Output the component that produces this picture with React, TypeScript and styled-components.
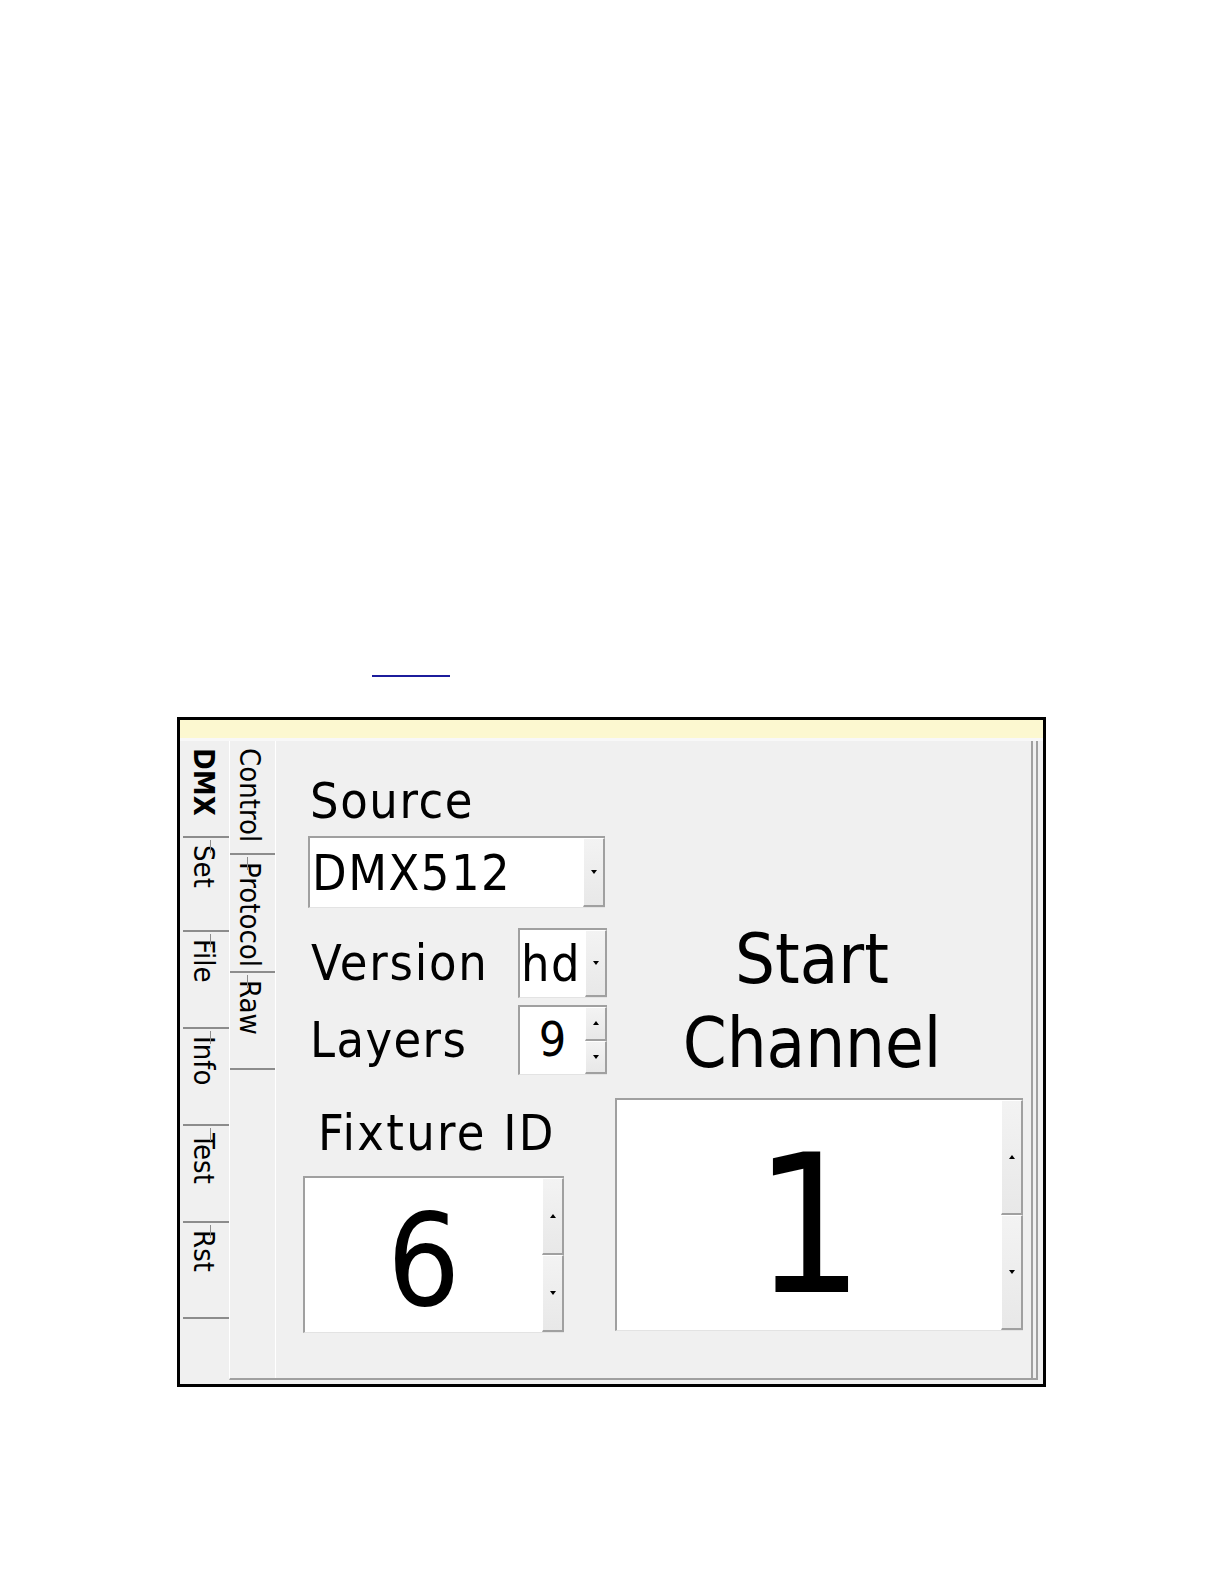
import React from "react";
import styled, { createGlobalStyle, css } from "styled-components";

const FONT = `"DejaVu Sans Condensed", "DejaVu Sans", "Liberation Sans", sans-serif`;

const GlobalStyle = createGlobalStyle`
  html, body { margin: 0; padding: 0; background: #ffffff; }
  #root { width: 1224px; min-height: 1584px; }
`;

const Page = styled.div`
  width: 1224px;
  min-height: 1584px;
  box-sizing: border-box;
  padding-top: 675px;
  font-family: ${FONT};
  font-stretch: condensed;
  color: #000;
`;

const BlankLink = styled.a`
  display: block;
  margin-left: 372px;
  width: 78px;
  height: 0;
  border-bottom: 2px solid #1c1c9c;
`;

const Frame = styled.div`
  margin: 40px 0 0 177px;
  width: 869px;
  height: 670px;
  box-sizing: border-box;
  border: 3px solid #000;
  background: #f0f0f0;
  display: flex;
  flex-direction: column;
`;

const InfoBar = styled.div`
  flex: none;
  height: 18px;
  background: #fcf8d0;
`;

const TabArea = styled.div`
  flex: 1;
  min-height: 0;
  display: flex;
  border-top: 3px solid #f8f8f8;
`;

const TabStrip = styled.div<{ $w: number; $pl: number }>`
  flex: none;
  width: ${(p) => p.$w}px;
  box-sizing: border-box;
  padding-left: ${(p) => p.$pl}px;
  display: flex;
  flex-direction: column;
`;

const Tab = styled.div<{ $h: number; $active?: boolean; $tickX?: number; $pr: number; $lh: number }>`
  position: relative;
  flex: none;
  height: ${(p) => p.$h}px;
  box-sizing: border-box;
  border-bottom: 2px solid #8c8c8c;
  writing-mode: vertical-rl;
  white-space: nowrap;
  font-size: 29px;
  line-height: ${(p) => p.$lh}px;
  font-weight: ${(p) => (p.$active ? 700 : 400)};
  padding-top: 7px;
  padding-right: ${(p) => p.$pr}px;
  ${(p) =>
    p.$tickX !== undefined &&
    css`
      &::before {
        content: "";
        position: absolute;
        top: 2px;
        left: ${p.$tickX}px;
        width: 1px;
        height: 13px;
        background: #8c8c8c;
      }
    `}
`;

const OuterPage = styled.div`
  flex: 1;
  min-width: 0;
  display: flex;
  margin: 0 5px 4px 0;
  border-left: 1px solid #ffffff;
  border-right: 2px solid #a0a0a0;
  border-bottom: 2px solid #a0a0a0;
`;

const InnerPage = styled.div`
  flex: 1;
  min-width: 0;
  margin-right: 3px;
  border-left: 1px solid #ffffff;
  border-right: 2px solid #a0a0a0;
`;

const Content = styled.div`
  display: grid;
  grid-template-columns: 304px 408px;
  column-gap: 8px;
  padding-left: 27px;
`;

const Column = styled.div<{ $pt: number }>`
  display: flex;
  flex-direction: column;
  padding-top: ${(p) => p.$pt}px;
`;

const Label = styled.div<{
  $size: number;
  $lh: number;
  $pl?: number;
  $pr?: number;
  $mt?: number;
  $ls?: number;
  $center?: boolean;
}>`
  font-size: ${(p) => p.$size}px;
  line-height: ${(p) => p.$lh}px;
  letter-spacing: ${(p) => p.$ls ?? 0}px;
  padding-left: ${(p) => p.$pl ?? 0}px;
  padding-right: ${(p) => p.$pr ?? 0}px;
  margin-top: ${(p) => p.$mt ?? 0}px;
  text-align: ${(p) => (p.$center ? "center" : "left")};
  white-space: nowrap;
`;

const Row = styled.div<{ $mt: number }>`
  display: grid;
  grid-template-columns: 215px 89px;
  align-items: center;
  margin-top: ${(p) => p.$mt}px;
`;

const Field = styled.div<{ $w: number; $h: number; $ml?: number; $mt?: number }>`
  display: flex;
  width: ${(p) => p.$w}px;
  height: ${(p) => p.$h}px;
  margin-left: ${(p) => p.$ml ?? 0}px;
  margin-top: ${(p) => p.$mt ?? 0}px;
  box-sizing: border-box;
  background: #ffffff;
  border-top: 2px solid #a0a0a0;
  border-left: 2px solid #a0a0a0;
  border-bottom: 1px solid #e3e3e3;
`;

const Value = styled.div<{
  $size: number;
  $center?: boolean;
  $pt?: number;
  $pb?: number;
  $pl?: number;
  $ls?: number;
}>`
  flex: 1;
  min-width: 0;
  display: flex;
  align-items: center;
  justify-content: ${(p) => (p.$center ? "center" : "flex-start")};
  font-size: ${(p) => p.$size}px;
  line-height: 1;
  letter-spacing: ${(p) => p.$ls ?? 0}px;
  padding-top: ${(p) => p.$pt ?? 0}px;
  padding-bottom: ${(p) => p.$pb ?? 0}px;
  padding-left: ${(p) => p.$pl ?? 0}px;
  white-space: nowrap;
`;

const Buttons = styled.div`
  flex: none;
  width: 22px;
  display: flex;
  flex-direction: column;
`;

const Btn = styled.div`
  flex: 1;
  display: flex;
  align-items: center;
  justify-content: center;
  box-sizing: border-box;
  background: linear-gradient(#f3f3f3, #e8e8e8);
  border-top: 1px solid #ffffff;
  border-left: 1px solid #ffffff;
  border-right: 2px solid #a0a0a0;
  border-bottom: 2px solid #a0a0a0;
`;

const Arrow = styled.span<{ $dir: "up" | "down" }>`
  width: 0;
  height: 0;
  border-left: 3px solid transparent;
  border-right: 3px solid transparent;
  ${(p) => (p.$dir === "up" ? "border-bottom: 4px solid #000;" : "border-top: 4px solid #000;")}
`;

const outerTabs = [
  { label: "DMX", h: 97, active: true },
  { label: "Set", h: 94 },
  { label: "File", h: 97 },
  { label: "Info", h: 97 },
  { label: "Test", h: 97 },
  { label: "Rst", h: 96 },
];

const innerTabs = [
  { label: "Control", h: 114, active: true },
  { label: "Protocol", h: 118 },
  { label: "Raw", h: 97 },
];

const DropDown = () => (
  <Buttons>
    <Btn>
      <Arrow $dir="down" />
    </Btn>
  </Buttons>
);

const Spin = () => (
  <Buttons>
    <Btn>
      <Arrow $dir="up" />
    </Btn>
    <Btn>
      <Arrow $dir="down" />
    </Btn>
  </Buttons>
);

export default function App() {
  return (
    <Page>
      <GlobalStyle />
      <BlankLink href="#" aria-label="link" />
      <Frame>
        <InfoBar />
        <TabArea>
          <TabStrip $w={49} $pl={3}>
            {outerTabs.map((t, i) => (
              <Tab key={t.label} $h={t.h} $active={t.active} $tickX={i > 0 ? 27 : undefined} $pr={5} $lh={40}>
                {t.label}
              </Tab>
            ))}
          </TabStrip>
          <OuterPage>
            <TabStrip $w={45} $pl={0}>
              {innerTabs.map((t, i) => (
                <Tab key={t.label} $h={t.h} $tickX={i > 0 ? 17 : undefined} $pr={10} $lh={31}>
                  {t.label}
                </Tab>
              ))}
            </TabStrip>
            <InnerPage>
              <Content>
                <Column $pt={35}>
                  <Label $size={50} $lh={50} $pl={7} $ls={1.6}>
                    Source
                  </Label>
                  <Field $w={297} $h={72} $ml={5} $mt={10}>
                    <Value $size={50} $pl={2} $ls={1.5}>
                      DMX512
                    </Value>
                    <DropDown />
                  </Field>
                  <Row $mt={20}>
                    <Label $size={50} $lh={50} $pl={8} $ls={1.8}>
                      Version
                    </Label>
                    <Field $w={89} $h={70}>
                      <Value $size={50} $pl={1} $ls={1.5}>
                        hd
                      </Value>
                      <DropDown />
                    </Field>
                  </Row>
                  <Row $mt={7}>
                    <Label $size={50} $lh={50} $pl={7} $ls={1.4}>
                      Layers
                    </Label>
                    <Field $w={89} $h={70}>
                      <Value $size={48} $center $pb={4}>
                        9
                      </Value>
                      <Spin />
                    </Field>
                  </Row>
                  <Label $size={50} $lh={50} $pl={15} $mt={33} $ls={2.3}>
                    Fixture ID
                  </Label>
                  <Field $w={261} $h={157} $mt={18}>
                    <Value $size={128} $center $pt={12}>
                      6
                    </Value>
                    <Spin />
                  </Field>
                </Column>
                <Column $pt={176}>
                  <Label $size={70} $lh={84} $pr={14} $center>
                    Start
                    <br />
                    Channel
                  </Label>
                  <Field $w={408} $h={233} $mt={13}>
                    <Value $size={192} $center $pt={21}>
                      1
                    </Value>
                    <Spin />
                  </Field>
                </Column>
              </Content>
            </InnerPage>
          </OuterPage>
        </TabArea>
      </Frame>
    </Page>
  );
}
